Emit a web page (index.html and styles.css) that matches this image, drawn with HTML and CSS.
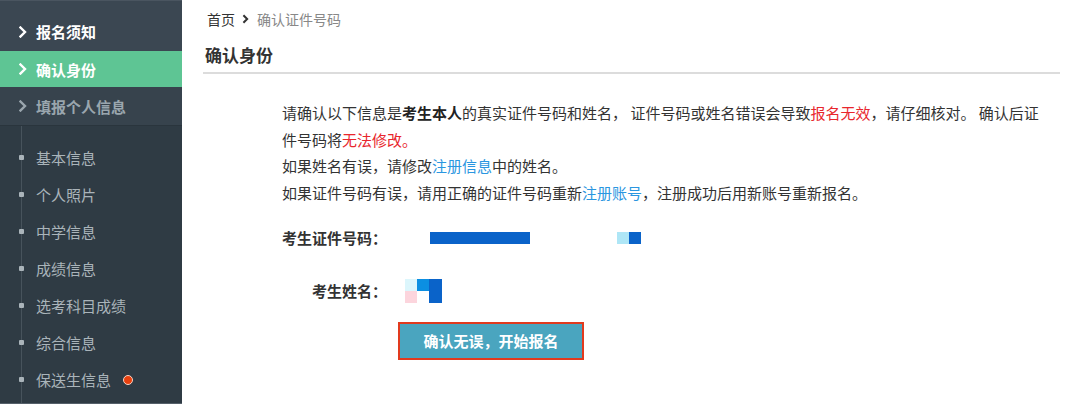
FILE: index.html
```html
<!DOCTYPE html>
<html lang="zh">
<head>
<meta charset="utf-8">
<link rel="stylesheet" href="styles.css">
</head>
<body>
<div class="page">
  <aside class="sidebar">
    <div class="nav nav-top"><svg class="chev" viewBox="0 0 8 12"><polyline points="1.5,1.5 6,6 1.5,10.5"/></svg>报名须知</div>
    <div class="nav nav-active"><svg class="chev" viewBox="0 0 8 12"><polyline points="1.5,1.5 6,6 1.5,10.5"/></svg>确认身份</div>
    <div class="nav nav-dim"><svg class="chev" viewBox="0 0 8 12"><polyline points="1.5,1.5 6,6 1.5,10.5"/></svg>填报个人信息</div>
    <ul class="sub">
      <li>基本信息</li>
      <li>个人照片</li>
      <li>中学信息</li>
      <li>成绩信息</li>
      <li>选考科目成绩</li>
      <li>综合信息</li>
      <li>保送生信息<span class="dot"></span></li>
    </ul>
  </aside>
  <main class="main">
    <div class="crumb"><span class="home">首页</span><svg class="sep" viewBox="0 0 8 12"><polyline points="1.5,1.5 6,6 1.5,10.5"/></svg><span class="cur">确认证件号码</span></div>
    <h1 class="title">确认身份</h1>
    <div class="content">
      <p class="info"><span>请确认以下信息是</span><b>考生本人</b><span>的真实证件号码和姓名， 证件号码或姓名错误会导致</span><span class="red">报名无效</span><span>，请仔细核对。 确认后证</span><br><span>件号码将</span><span class="red">无法修改。</span><br><span>如果姓名有误，请修改</span><span class="blue">注册信息</span><span>中的姓名。</span><br><span>如果证件号码有误，请用正确的证件号码重新</span><span class="blue">注册账号</span><span>，注册成功后用新账号重新报名。</span></p>
      <div class="row row-id">
        <span class="label">考生证件号码：</span>
        <span class="idbar"></span>
        <span class="idtail"><i class="c1"></i><i class="c2"></i></span>
      </div>
      <div class="row row-name">
        <span class="label">考生姓名：</span>
        <span class="namegrid"><i class="n1"></i><i class="n2"></i><i class="n3"></i><i class="n4"></i></span>
      </div>
      <div class="btnrow"><button class="btn">确认无误，开始报名</button></div>
    </div>
  </main>
</div>
</body>
</html>
```
FILE: styles.css
```css
* { box-sizing: border-box; }
html, body { margin: 0; padding: 0; background: #fff; }
body { font-family: "Noto Sans CJK SC", "Noto Sans", sans-serif; width: 1080px; height: 406px; overflow: hidden; }
.page { display: flex; height: 406px; }
.sidebar { width: 182px; flex: none; background: #2f3b44; height: 404px; border-bottom: 1px solid #55606a; display: flex; flex-direction: column; }
.nav { height: 37px; display: flex; align-items: center; padding-left: 19px; font-size: 15px; font-weight: bold; color: #fff; }
.nav-top { height: 51px; padding-top: 11px; background: #3b4752; border-top: 1px solid #4a5560; }
.nav-active { background: #5ec594; height: 36px; }
.nav-dim { background: #37434d; color: #9aa6ae; height: 39px; border-bottom: 1px solid #2a353d; }
.chev { width: 8px; height: 12px; margin-right: 9px; flex: none; }
.chev polyline { fill: none; stroke: currentColor; stroke-width: 2.4; stroke-linecap: square; }
.sub { list-style: none; margin: 0; padding: 13px 0 0 0; position: relative; flex: 1; }
.sub::before { content: ""; position: absolute; left: 21px; top: 0; bottom: 0; width: 1px; background: #47535c; }
.sub li { height: 37px; display: flex; align-items: center; padding-left: 36px; font-size: 15px; color: #aab4ba; position: relative; }
.sub li::before { content: ""; position: absolute; left: 19px; top: 16px; width: 5px; height: 5px; background: #aab4ba; border-radius: 1px; }
.dot { display: inline-block; width: 10px; height: 10px; border-radius: 50%; background: #e8400e; border: 1.5px solid #f7d3c5; margin-left: 12px; }
.main { flex: 1; padding: 8px 20px 0 21px; }
.crumb { font-size: 14px; height: 22px; display: flex; align-items: center; padding-left: 4px; }
.home { color: #333; }
.sep { width: 7px; height: 10px; margin: 0 8px 0 7px; color: #333; }
.sep polyline { fill: none; stroke: currentColor; stroke-width: 2.4; }
.cur { color: #888; }
.title { margin: 10px 0 0 0; font-size: 17px; font-weight: bold; color: #333; height: 34px; line-height: 30px; border-bottom: 2px solid #dcdcdc; padding-left: 2px; }
.content { padding-left: 79px; padding-top: 26px; }
.info { margin: 0; font-size: 15px; line-height: 26.7px; color: #333; white-space: nowrap; }
.info b { color: #222; }
.red { color: #e8262d; }
.blue { color: #2a96e0; }
.row { display: flex; align-items: center; }
.label { width: 105px; flex: none; text-align: right; font-size: 15px; font-weight: bold; color: #333; white-space: nowrap; }
.row-id { margin-top: 19px; height: 24px; }
.idbar { width: 100px; height: 12px; background: #0a63c9; margin-left: 43px; }
.idtail { display: flex; margin-left: 87px; }
.idtail i { width: 12px; height: 12px; }
.c1 { background: #aee6f6; }
.c2 { background: #0a63c9; }
.row-name { margin-top: 29px; height: 24px; }
.namegrid { display: grid; grid-template-columns: 12px 12px 13px; grid-template-rows: 12px 12px; margin-left: 18px; }
.n1 { background: #dcf6fc; }
.n2 { background: #0c8fe2; }
.n3 { background: #0a63c9; grid-row: 1 / 3; grid-column: 3; }
.n4 { background: #fcd5dd; grid-row: 2; grid-column: 1; }
.btnrow { margin-top: 19px; padding-left: 116px; }
.btn { width: 186px; height: 38px; background: #4aa5bf; border: 2.5px solid #e23a1e; color: #fff; font-family: inherit; font-size: 15px; font-weight: bold; padding: 0; }
```
